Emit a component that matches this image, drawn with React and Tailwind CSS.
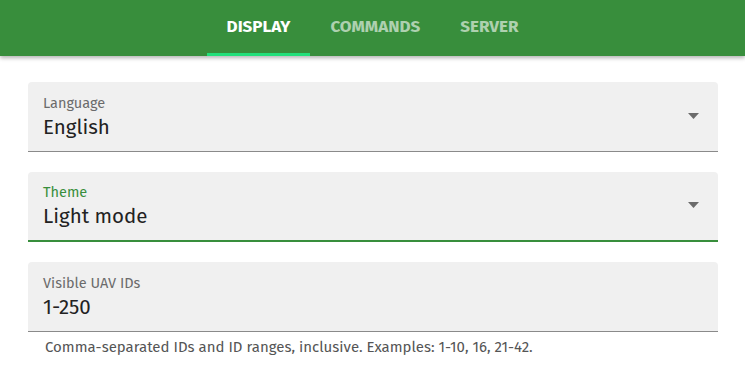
import React from 'react';

const tabs = ['Display', 'Commands', 'Server'];

const Arrow = () => (
    <svg width="11" height="6" viewBox="0 0 11 6" className="shrink-0 -mt-[2px]">
        <path d="M0 0 L11 0 L5.5 6 Z" fill="#6b6b6b" />
    </svg>
);

const Field = ({ label, value, focused, select }) => (
    <div
        className={`flex items-center rounded-t bg-[#f0f0f0] pl-[15px] pr-[19px] h-[70px] border-b ${
            focused ? 'border-b-2 border-[#388e3c]' : 'border-[#8a8a8a]'
        }`}
    >
        <div className="flex-1 flex flex-col">
            <span className={`text-[14.5px] leading-[20px] ${focused ? 'text-[#388e3c]' : 'text-[#6b6b6b]'}`}>
                {label}
            </span>
            <span className="text-[20.5px] leading-[28px] text-[#222]">{value}</span>
        </div>
        {select && <Arrow />}
    </div>
);

export default function App() {
    return (
        <div className="w-[745px] h-[382px] bg-white overflow-hidden" style={{ fontFamily: '"Fira Sans", "Open Sans", sans-serif' }}>
            <div className="h-[56px] bg-[#388e3c] flex justify-center shadow-[0_2px_4px_rgba(0,0,0,0.3)] relative z-10">
                <div className="flex">
                    {tabs.map((t, i) => (
                        <div
                            key={t}
                            className={`relative flex items-center justify-center h-full pb-[3px] px-[20px] uppercase font-bold text-[17px] tracking-normal ${
                                i === 0 ? 'text-white' : 'text-white/60'
                            }`}
                        >
                            {t}
                            {i === 0 && <div className="absolute bottom-0 left-0 right-0 h-[3px] bg-[#22e07a]" />}
                        </div>
                    ))}
                </div>
            </div>
            <div className="pl-[28px] pr-[27px] pt-[26px] flex flex-col gap-[20px]">
                <Field label="Language" value="English" select />
                <Field label="Theme" value="Light mode" select focused />
                <div>
                    <Field label="Visible UAV IDs" value="1-250" />
                    <p className="text-[15px] text-[#555] pl-[17px] pt-[4px]">
                        Comma-separated IDs and ID ranges, inclusive. Examples: 1-10, 16, 21-42.
                    </p>
                </div>
            </div>
        </div>
    );
}
